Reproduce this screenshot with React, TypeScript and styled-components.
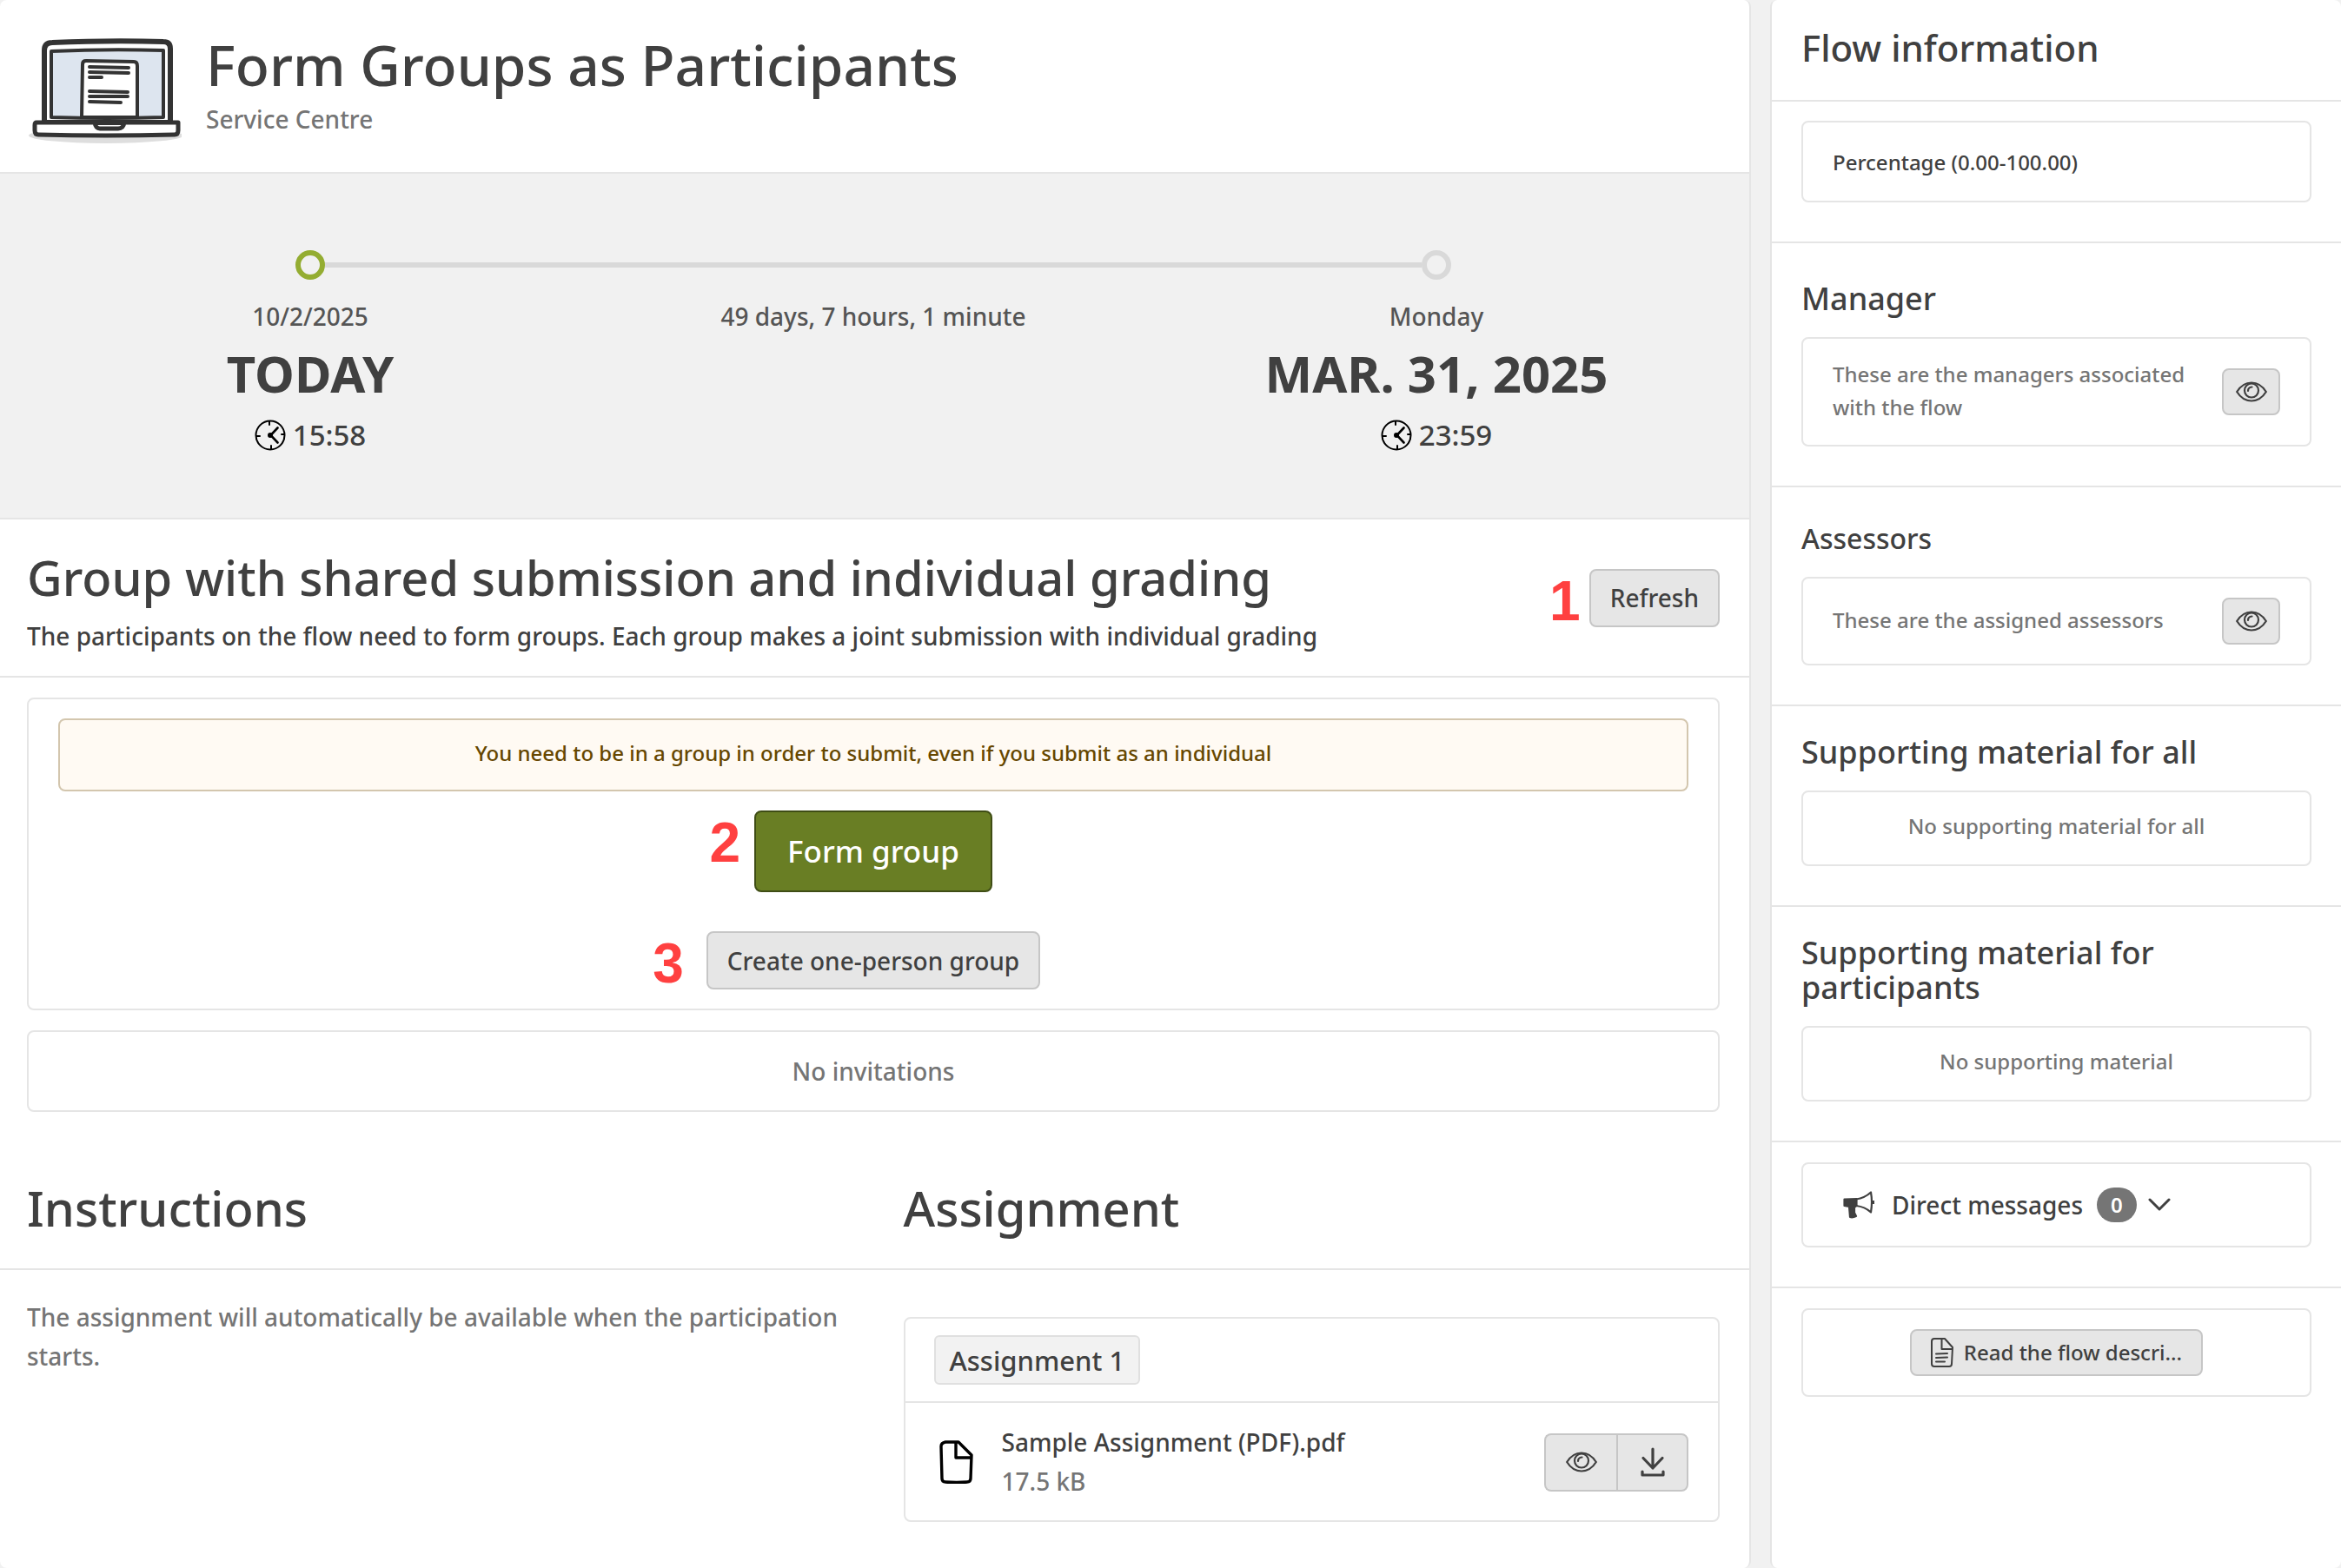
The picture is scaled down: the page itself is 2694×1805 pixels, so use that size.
import React from "react";
import styled, { createGlobalStyle } from "styled-components";

const ink = "#404040";
const muted = "#757575";
const line = "#e5e5e5";

const GlobalStyle = createGlobalStyle`
  *, *::before, *::after { box-sizing: border-box; }
  body {
    margin: 0;
    background: #f1f1f1;
    color: ${ink};
    font-family: "Noto Sans", "Open Sans", sans-serif;
    font-size: 28px;
    font-weight: 500;
    line-height: 44px;
  }
  h1, h2, h3, p { margin: 0; font-weight: 500; }
  button { font: inherit; color: inherit; cursor: pointer; }
  svg { display: block; flex: none; }
`;

const Page = styled.div`
  display: flex;
  gap: 22px;
  min-height: 100vh;
`;

const Main = styled.main`
  flex: 1;
  min-width: 0;
  background: #fff;
  border-right: 2px solid ${line};
  border-radius: 8px;
`;

const Header = styled.header`
  display: flex;
  gap: 28px;
  padding: 35px 34px 33px 32px;
  border-bottom: 2px solid ${line};
`;

const Title = styled.h1`
  font-size: 64px;
  line-height: 80px;
`;

const Unit = styled.p`
  color: ${muted};
`;

const Timeline = styled.section`
  display: grid;
  grid-template-columns: repeat(3, 1fr);
  padding: 87px 36px 67px 33px;
  background: #f1f1f1;
  border-bottom: 2px solid ${line};
  text-align: center;
`;

const Track = styled.div`
  display: flex;
  align-items: center;
  height: 36px;
  margin-bottom: 19px;
`;

const Rail = styled.span<{ $on?: boolean }>`
  flex: 1;
  height: 6px;
  background: ${(p) => (p.$on ? "#d9d9d9" : "transparent")};
`;

const Dot = styled.span<{ $active?: boolean }>`
  width: 34px;
  height: 34px;
  border: 6px solid ${(p) => (p.$active ? "#94ad32" : "#d9d9d9")};
  border-radius: 50%;
`;

const Caption = styled.p`
  color: #555;
`;

const Day = styled.p`
  font-size: 58px;
  font-weight: 700;
  line-height: 87px;
  text-transform: uppercase;
`;

const Time = styled.p`
  display: flex;
  justify-content: center;
  align-items: center;
  gap: 8px;
  font-size: 33px;
  line-height: 56px;
`;

const Intro = styled.section`
  display: flex;
  align-items: center;
  justify-content: space-between;
  padding: 22px 34px 22px 31px;
  border-bottom: 2px solid ${line};
`;

const Heading = styled.h2`
  font-size: 56px;
  line-height: 88px;
`;

const Lead = styled.p`
  line-height: 48px;
`;

const Anchor = styled.div`
  position: relative;
  display: flex;
`;

const Marker = styled.span<{ $gap: number }>`
  position: absolute;
  top: 0;
  right: 100%;
  margin-right: ${(p) => p.$gap}px;
  color: #ff4040;
  font-family: "Liberation Sans", Arial, sans-serif;
  font-size: 64px;
  font-weight: 700;
  line-height: 74px;
`;

const Button = styled.button`
  display: inline-flex;
  align-items: center;
  justify-content: center;
  height: 67px;
  padding: 0 22px;
  border: 2px solid #c6c6c6;
  border-radius: 8px;
  background: #e6e6e6;
`;

const PrimaryButton = styled(Button)`
  height: 94px;
  padding: 0 36px;
  border-color: #3f4d15;
  background: #697e24;
  color: #fff;
  font-size: 35px;
`;

const CompactButton = styled(Button)`
  height: 54px;
  min-width: 67px;
  gap: 12px;
  font-size: 24px;
`;

const EyeButton = styled(CompactButton)`
  padding: 0;
`;

const Body = styled.section`
  display: grid;
  gap: 23px;
  padding: 23px 34px 0 31px;
`;

const Card = styled.div`
  border: 2px solid ${line};
  border-radius: 8px;
`;

const GroupCard = styled(Card)`
  display: flex;
  flex-direction: column;
  align-items: center;
  padding: 22px 34px;
`;

const Alert = styled.p`
  align-self: stretch;
  margin-bottom: 22px;
  padding: 16px 18px 20px;
  border: 2px solid #d3c6ae;
  border-radius: 8px;
  background: #fffaf3;
  color: #664700;
  font-size: 24px;
  text-align: center;
`;

const Actions = styled.div`
  display: grid;
  justify-items: center;
  gap: 45px;
`;

const Empty = styled(Card)`
  padding: 23px;
  color: ${muted};
  text-align: center;
`;

const TwoColumns = styled.div`
  display: grid;
  grid-template-columns: 1fr 1fr;
  gap: 69px;
  padding: 0 34px 0 31px;
`;

const ColumnHeads = styled(TwoColumns)`
  padding-top: 66px;
  padding-bottom: 26px;
  border-bottom: 2px solid ${line};
`;

const Instructions = styled.p`
  padding-top: 32px;
  color: ${muted};
  line-height: 45px;
`;

const AssignmentCard = styled(Card)`
  margin-top: 54px;
`;

const AssignmentHead = styled.div`
  padding: 19px 33px;
  border-bottom: 2px solid ${line};
`;

const Tag = styled.span`
  display: inline-flex;
  align-items: center;
  height: 57px;
  padding: 0 16px;
  border: 2px solid #e0e0e0;
  border-radius: 6px;
  background: #f2f2f2;
  font-size: 31px;
  vertical-align: top;
`;

const FileRow = styled.div`
  display: flex;
  align-items: center;
  gap: 28px;
  padding: 23px 34px 22px 33px;
`;

const FileText = styled.div`
  flex: 1;
  line-height: 45px;
`;

const FileSize = styled.p`
  color: ${muted};
`;

const Split = styled.div`
  display: flex;
`;

const SplitButton = styled(Button)`
  width: 83px;
  padding: 0;
  &:first-child { border-radius: 8px 0 0 8px; border-right: 0; }
  &:last-child { border-radius: 0 8px 8px 0; }
`;

const Side = styled.aside`
  flex: 0 0 657px;
  background: #fff;
  border-left: 2px solid ${line};
  border-radius: 8px;
`;

const SideTitle = styled.h2`
  padding: 25px 34px 30px;
  border-bottom: 2px solid ${line};
  font-size: 42px;
  line-height: 60px;
`;

const SideSection = styled.section<{ $top: number; $last?: boolean }>`
  padding: ${(p) => p.$top}px 34px 45px;
  border-bottom: ${(p) => (p.$last ? "0" : `2px solid ${line}`)};
`;

const SideHeading = styled.h3<{ $small?: boolean }>`
  margin-bottom: 24px;
  font-size: ${(p) => (p.$small ? 32 : 36)}px;
  line-height: 40px;
`;

const SideCard = styled(Card)<{ $tall?: boolean }>`
  display: flex;
  align-items: center;
  justify-content: space-between;
  gap: 28px;
  padding: ${(p) => (p.$tall ? "27px 34px 25px" : "22px 34px")};
  font-size: 24px;
  line-height: 38px;
`;

const SideText = styled.p`
  margin-bottom: 2px;
  color: ${muted};
`;

const SideEmpty = styled(Card)`
  padding: 20px 34px 25px;
  color: ${muted};
  font-size: 24px;
  line-height: 38px;
  text-align: center;
`;

const MessagesButton = styled.button`
  display: flex;
  align-items: center;
  width: 100%;
  height: 98px;
  padding: 0 46px;
  border: 2px solid ${line};
  border-radius: 8px;
  background: none;
`;

const Count = styled.span`
  margin: 0 13px 0 16px;
  padding: 0 16px;
  border-radius: 20px;
  background: ${muted};
  color: #fff;
  font-size: 24px;
  font-weight: 600;
  line-height: 40px;
`;

const MessagesLabel = styled.span`
  margin-left: 20px;
`;

const DescriptionCard = styled(Card)`
  display: flex;
  justify-content: center;
  padding: 22px;
`;

const Laptop = () => (
  <svg width="177" height="130" viewBox="0 0 177 130" strokeLinejoin="round" aria-hidden="true">
    <ellipse cx="90" cy="121" rx="89" ry="9" fill="#dedede" />
    <path d="M19 106V23q0-9 9-9 68-3 128-1 8 0 8 8v85z" fill="#fff" stroke="#333" strokeWidth="6" />
    <path d="M27 24q64-3 129-1v77q-64 2-129 0z" fill="#dde5ef" stroke="#333" strokeWidth="4" />
    <path d="M62 100l1-61q0-4 4-4l55 1q4 0 4 5v59z" fill="#fff" stroke="#333" strokeWidth="4" />
    <path d="M71 42l45 1M71 48l45 1M71 54h14M71 70l44 1M71 76h44M71 82l36 1" stroke="#333" strokeWidth="4" strokeLinecap="round" />
    <path d="M10 106h67q1 7 6 7h21q6 0 7-7h62v9q0 5-4 5-80 2-157 0-4 0-4-5v-6q0-3 2-3z" fill="#fff" stroke="#333" strokeWidth="5" />
  </svg>
);

const Clock = () => (
  <svg width="36" height="36" viewBox="0 0 36 36" fill="none" stroke="#000" strokeWidth="2" strokeLinecap="round" aria-hidden="true">
    <circle cx="18" cy="18" r="16.5" />
    <path d="M17 2v4M19 30v4M2 19h4M31 17h3" />
    <path d="M26.500 9.500l-8 8.500 8 8.500" strokeWidth="2.600" />
    <circle cx="18" cy="18" r="2" fill="#000" />
  </svg>
);

const Eye = () => (
  <svg width="36" height="24" viewBox="0 0 36 24" fill="none" stroke={ink} strokeWidth="2.2" strokeLinecap="round" aria-hidden="true">
    <path d="M1.2 12C10-2 26-2 34.8 12 26 26 10 26 1.2 12z" />
    <circle cx="18" cy="10.5" r="8" />
    <path d="M14 11q0-4 4.500-4.500" />
  </svg>
);

const Download = () => (
  <svg width="28" height="34" viewBox="0 0 28 34" fill="none" stroke={ink} strokeWidth="3.200" strokeLinecap="round" strokeLinejoin="round" aria-hidden="true">
    <path d="M14 2v22M3 12.500l11 11.500 11-11.500M2 28v4h24v-4" />
  </svg>
);

const FileIcon = () => (
  <svg width="50" height="50" viewBox="0 0 50 50" fill="none" stroke="#000" strokeWidth="3.400" strokeLinejoin="round" aria-hidden="true">
    <path d="M13 2h15l15 15-1 27q0 4-4 4-12 1-25 0-4 0-4-4L8 7q0-4 5-5zM25 2v18h18" />
  </svg>
);

const DocIcon = () => (
  <svg width="26" height="34" viewBox="0 0 26 34" fill="none" stroke={ink} strokeWidth="2" strokeLinejoin="round" strokeLinecap="round" aria-hidden="true">
    <path d="M4 1h12l9 10-1 19q0 3-3 3H4q-3 0-3-3V4q0-3 3-3zM12.500 1v12H25M6 18.500l13-.5M6 23l13-.5M6 27.500h10" />
  </svg>
);

const Megaphone = () => (
  <svg width="36" height="32" viewBox="0 0 36 32" fill="none" stroke={ink} strokeWidth="2.200" strokeLinejoin="round" aria-hidden="true">
    <path d="M1.500 9.500l14-.5v8l-2.500 2v6l2 4q-4 2-7 1l-1-12-5.500-1z" fill={ink} />
    <path d="M15 9.500Q25 8 32 1.500q2 11 0 23Q25 18 15 17" />
    <path d="M34.500 11v4" strokeWidth="3" />
  </svg>
);

const Chevron = () => (
  <svg width="26" height="16" viewBox="0 0 26 16" fill="none" stroke={ink} strokeWidth="3" strokeLinecap="round" strokeLinejoin="round" aria-hidden="true">
    <path d="M2 2l11 11L24 2" />
  </svg>
);

export default function App() {
  return (
    <>
      <GlobalStyle />
      <Page>
        <Main>
          <Header>
            <Laptop />
            <div>
              <Title>Form Groups as Participants</Title>
              <Unit>Service Centre</Unit>
            </div>
          </Header>

          <Timeline>
            <div>
              <Track><Rail /><Dot $active /><Rail $on /></Track>
              <Caption>10/2/2025</Caption>
              <Day>Today</Day>
              <Time><Clock />15:58</Time>
            </div>
            <div>
              <Track><Rail $on /></Track>
              <Caption>49 days, 7 hours, 1 minute</Caption>
            </div>
            <div>
              <Track><Rail $on /><Dot /><Rail /></Track>
              <Caption>Monday</Caption>
              <Day>Mar. 31, 2025</Day>
              <Time><Clock />23:59</Time>
            </div>
          </Timeline>

          <Intro>
            <div>
              <Heading>Group with shared submission and individual grading</Heading>
              <Lead>The participants on the flow need to form groups. Each group makes a joint submission with individual grading</Lead>
            </div>
            <Anchor>
              <Marker $gap={10}>1</Marker>
              <Button type="button">Refresh</Button>
            </Anchor>
          </Intro>

          <Body>
            <GroupCard>
              <Alert>You need to be in a group in order to submit, even if you submit as an individual</Alert>
              <Actions>
                <Anchor>
                  <Marker $gap={16}>2</Marker>
                  <PrimaryButton type="button">Form group</PrimaryButton>
                </Anchor>
                <Anchor>
                  <Marker $gap={26}>3</Marker>
                  <Button type="button">Create one-person group</Button>
                </Anchor>
              </Actions>
            </GroupCard>
            <Empty>No invitations</Empty>
          </Body>

          <ColumnHeads>
            <Heading>Instructions</Heading>
            <Heading>Assignment</Heading>
          </ColumnHeads>
          <TwoColumns>
            <Instructions>The assignment will automatically be available when the participation starts.</Instructions>
            <AssignmentCard>
              <AssignmentHead><Tag>Assignment 1</Tag></AssignmentHead>
              <FileRow>
                <FileIcon />
                <FileText>
                  <p>Sample Assignment (PDF).pdf</p>
                  <FileSize>17.5 kB</FileSize>
                </FileText>
                <Split>
                  <SplitButton type="button" aria-label="Preview"><Eye /></SplitButton>
                  <SplitButton type="button" aria-label="Download"><Download /></SplitButton>
                </Split>
              </FileRow>
            </AssignmentCard>
          </TwoColumns>
        </Main>

        <Side>
          <SideTitle>Flow information</SideTitle>
          <SideSection $top={22}>
            <SideCard $tall>Percentage (0.00-100.00)</SideCard>
          </SideSection>
          <SideSection $top={44}>
            <SideHeading>Manager</SideHeading>
            <SideCard>
              <SideText>These are the managers associated with the flow</SideText>
              <EyeButton type="button" aria-label="Show managers"><Eye /></EyeButton>
            </SideCard>
          </SideSection>
          <SideSection $top={39}>
            <SideHeading $small>Assessors</SideHeading>
            <SideCard>
              <SideText>These are the assigned assessors</SideText>
              <EyeButton type="button" aria-label="Show assessors"><Eye /></EyeButton>
            </SideCard>
          </SideSection>
          <SideSection $top={33}>
            <SideHeading>Supporting material for all</SideHeading>
            <SideEmpty>No supporting material for all</SideEmpty>
          </SideSection>
          <SideSection $top={33}>
            <SideHeading>Supporting material for participants</SideHeading>
            <SideEmpty>No supporting material</SideEmpty>
          </SideSection>
          <SideSection $top={23}>
            <MessagesButton type="button">
              <Megaphone />
              <MessagesLabel>Direct messages</MessagesLabel>
              <Count>0</Count>
              <Chevron />
            </MessagesButton>
          </SideSection>
          <SideSection $top={23} $last>
            <DescriptionCard>
              <CompactButton type="button"><DocIcon />Read the flow descri...</CompactButton>
            </DescriptionCard>
          </SideSection>
        </Side>
      </Page>
    </>
  );
}
